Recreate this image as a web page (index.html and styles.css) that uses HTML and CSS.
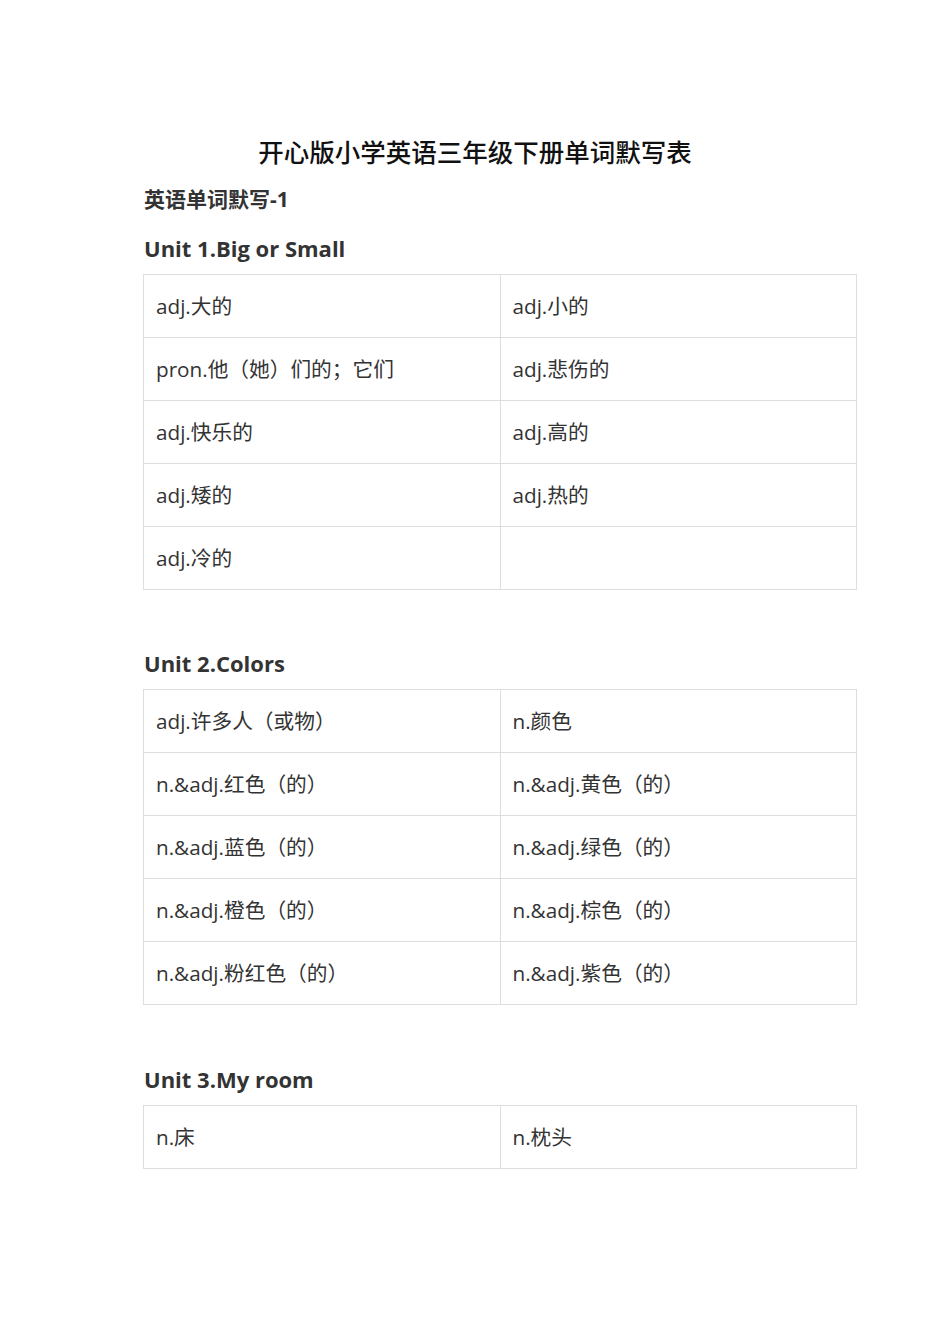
FILE: index.html
```html
<!DOCTYPE html>
<html lang="zh-CN">
<head>
<meta charset="utf-8">
<title>开心版小学英语三年级下册单词默写表</title>
<link rel="stylesheet" href="styles.css">
</head>
<body>
<div class="page">
  <h1 class="title">开心版小学英语三年级下册单词默写表</h1>
  <div class="content">
    <h2 class="sub">英语单词默写-1</h2>

    <h3 class="unit">Unit 1.Big or Small</h3>
    <table class="words">
      <tr><td>adj.大的</td><td>adj.小的</td></tr>
      <tr><td>pron.他（她）们的；它们</td><td>adj.悲伤的</td></tr>
      <tr><td>adj.快乐的</td><td>adj.高的</td></tr>
      <tr><td>adj.矮的</td><td>adj.热的</td></tr>
      <tr><td>adj.冷的</td><td></td></tr>
    </table>

    <h3 class="unit unit-gap">Unit 2.Colors</h3>
    <table class="words">
      <tr><td>adj.许多人（或物）</td><td>n.颜色</td></tr>
      <tr><td>n.&amp;adj.红色（的）</td><td>n.&amp;adj.黄色（的）</td></tr>
      <tr><td>n.&amp;adj.蓝色（的）</td><td>n.&amp;adj.绿色（的）</td></tr>
      <tr><td>n.&amp;adj.橙色（的）</td><td>n.&amp;adj.棕色（的）</td></tr>
      <tr><td>n.&amp;adj.粉红色（的）</td><td>n.&amp;adj.紫色（的）</td></tr>
    </table>

    <h3 class="unit unit-gap unit-last">Unit 3.My room</h3>
    <table class="words">
      <tr><td>n.床</td><td>n.枕头</td></tr>
    </table>
  </div>
</div>
</body>
</html>
```

FILE: styles.css
```css
html, body {
  margin: 0;
  padding: 0;
  background: #ffffff;
}

body {
  font-family: "Open Sans", "Noto Sans CJK SC", sans-serif;
  color: #333333;
}

.page {
  width: 950px;
  padding-top: 131px;
}

.title {
  margin: 0;
  text-align: center;
  font-family: "Noto Sans CJK SC", sans-serif;
  font-size: 25.5px;
  font-weight: 500;
  line-height: 40px;
  color: #111111;
}

.content {
  width: 714px;
  margin-left: 143px;
}

.sub {
  margin: 13px 0 0 1px;
  font-size: 21px;
  font-weight: 700;
  line-height: 30px;
  color: #333333;
}

.unit {
  margin: 19px 0 11px 1px;
  font-size: 22px;
  font-weight: 700;
  line-height: 30px;
  color: #333333;
}

.unit-gap {
  margin-top: 58px;
}

.unit-last {
  margin-top: 59px;
}

.words {
  width: 714px;
  border-collapse: collapse;
  table-layout: fixed;
}

.words td {
  width: 50%;
  height: 63px;
  padding: 0 12px;
  box-sizing: border-box;
  border: 1px solid #dedede;
  font-size: 20.7px;
  line-height: 26px;
  color: #333333;
  vertical-align: middle;
}
```
